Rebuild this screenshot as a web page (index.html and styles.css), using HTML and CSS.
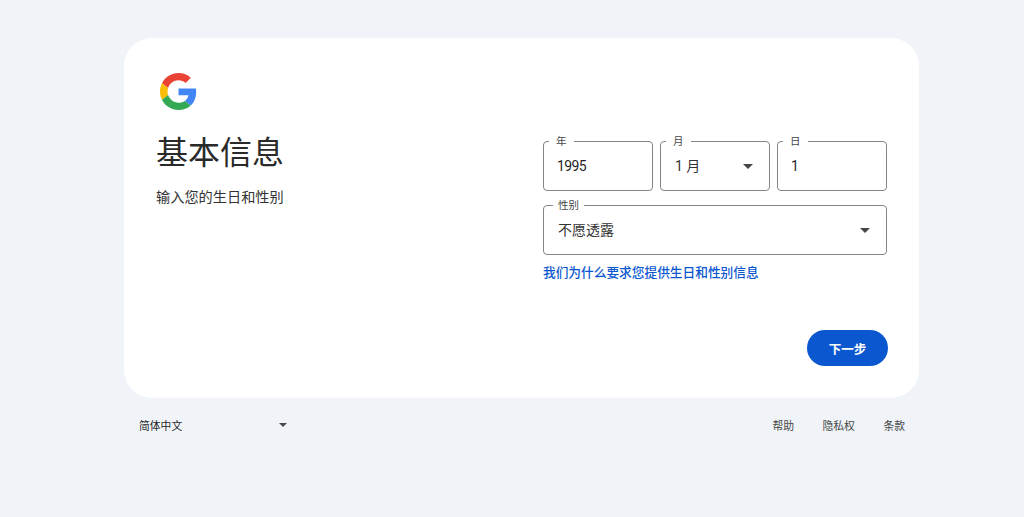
FILE: index.html
```html
<!DOCTYPE html>
<html lang="zh-CN">

<head>
     <meta charset="UTF-8">
     <meta name="viewport" content="width=device-width, initial-scale=1.0">
     <title>基本信息</title>
     <link rel="stylesheet" href="styles.css">
</head>

<body>

     <div class="page_wrap">
          <div class="card">
               <svg class="logo" viewBox="0 0 48 48">
                    <path fill="#EA4335" d="M24 9.5c3.54 0 6.71 1.22 9.21 3.6l6.85-6.85C35.9 2.38 30.47 0 24 0 14.62 0 6.51 5.38 2.56 13.22l7.98 6.19C12.43 13.72 17.74 9.5 24 9.5z"/>
                    <path fill="#4285F4" d="M46.98 24.55c0-1.57-.15-3.09-.38-4.55H24v9.02h12.94c-.58 2.96-2.26 5.48-4.78 7.18l7.73 6c4.51-4.18 7.09-10.36 7.09-17.65z"/>
                    <path fill="#FBBC05" d="M10.53 28.59c-.48-1.45-.76-2.99-.76-4.59s.27-3.14.76-4.59l-7.98-6.19C.92 16.46 0 20.12 0 24c0 3.88.92 7.54 2.56 10.78l7.97-6.19z"/>
                    <path fill="#34A853" d="M24 48c6.48 0 11.93-2.13 15.89-5.81l-7.73-6c-2.15 1.45-4.92 2.3-8.16 2.3-6.26 0-11.57-4.22-13.47-9.91l-7.98 6.19C6.51 42.62 14.62 48 24 48z"/>
               </svg>

               <div class="card_body">
                    <div class="intro">
                         <h1>基本信息</h1>
                         <p>输入您的生日和性别</p>
                    </div>

                    <div class="form_box">
                         <div class="field_row">
                              <div class="field">
                                   <span class="field_label field_label_short">年</span>
                                   <span class="field_num">1995</span>
                              </div>
                              <div class="field">
                                   <span class="field_label field_label_short">月</span>
                                   <span class="field_text">1 月</span>
                                   <i class="arrow"></i>
                              </div>
                              <div class="field">
                                   <span class="field_label field_label_short">日</span>
                                   <span class="field_num">1</span>
                              </div>
                         </div>
                         <div class="field_row">
                              <div class="field">
                                   <span class="field_label">性别</span>
                                   <span class="field_text">不愿透露</span>
                                   <i class="arrow"></i>
                              </div>
                         </div>
                         <a class="why_link" href="#">我们为什么要求您提供生日和性别信息</a>
                    </div>
               </div>

               <div class="btn_box">
                    <button class="next_btn">下一步</button>
               </div>
          </div>

          <div class="footer">
               <div class="lang_select">
                    <span>简体中文</span>
                    <i class="arrow"></i>
               </div>
               <div class="footer_links">
                    <a href="#">帮助</a>
                    <a href="#">隐私权</a>
                    <a href="#">条款</a>
               </div>
          </div>
     </div>

</body>

</html>
```

FILE: styles.css
```css
* {
     box-sizing: border-box;
}

body {
     margin: 0;
     height: 517px;
     overflow: hidden;
     background-color: #f0f4f9;
     color: #1f1f1f;
     font-family: Roboto, "Noto Sans CJK SC", sans-serif;
}

.page_wrap {
     width: 795px;
     margin: 38px 0 0 124px;
}

.card {
     height: 360px;
     padding: 35px 32px 32px;
     background-color: #fff;
     border-radius: 28px;
}

.logo {
     display: block;
     width: 37px;
     height: 37px;
     margin-left: 3.5px;
}

.card_body {
     display: flex;
     justify-content: space-between;
     margin-top: 23px;
}

h1 {
     margin: 0;
     font-size: 32px;
     font-weight: 400;
     line-height: 40px;
     color: #2a2a2a;
}

.intro p {
     margin: 14px 0 0;
     font-size: 14.2px;
     line-height: 20px;
     color: #333;
}

.form_box {
     width: 344px;
     padding-top: 8px;
}

.field_row {
     display: flex;
     gap: 7px;
     margin-bottom: 14px;
}

.field {
     position: relative;
     display: flex;
     flex: 1;
     align-items: center;
     justify-content: space-between;
     height: 50px;
     padding: 0 16px 0 13px;
     border: 1px solid #80868b;
     border-radius: 4px;
     font-size: 14px;
}

.field_num {
     margin-top: -1px;
     letter-spacing: -0.6px;
}

.field_text {
     margin-top: -2px;
     margin-left: 1px;
     color: #333;
}

.field_label {
     position: absolute;
     top: -6px;
     left: 9px;
     padding: 0 5px;
     background-color: #fff;
     color: #444746;
     font-size: 10.5px;
     line-height: 12px;
}

.field_label_short {
     left: 5px;
     padding: 0 7px;
}

.arrow {
     width: 0;
     height: 0;
     border-top: 5px solid #444746;
     border-right: 5px solid transparent;
     border-left: 5px solid transparent;
}

.why_link {
     display: block;
     margin-top: -5px;
     color: #0b57d0;
     font-size: 12.7px;
     font-weight: 500;
     line-height: 18px;
     text-decoration: none;
}

.btn_box {
     display: flex;
     justify-content: flex-end;
     margin: 48px -1px 0 0;
}

.next_btn {
     width: 81px;
     height: 36px;
     border: 0;
     border-radius: 18px;
     background-color: #0b57d0;
     color: #fff;
     font-family: inherit;
     font-size: 12.5px;
     font-weight: 700;
}

.footer {
     display: flex;
     align-items: center;
     justify-content: space-between;
     height: 54px;
     padding: 0 14px 0 15px;
     font-size: 10.8px;
}

.lang_select {
     display: flex;
     align-items: center;
     justify-content: space-between;
     width: 148px;
}

.lang_select .arrow {
     border-top-width: 4px;
     border-right-width: 4.5px;
     border-left-width: 4.5px;
}

.footer_links {
     display: flex;
     gap: 28.5px;
}

.footer_links a {
     color: #444746;
     text-decoration: none;
}
```
